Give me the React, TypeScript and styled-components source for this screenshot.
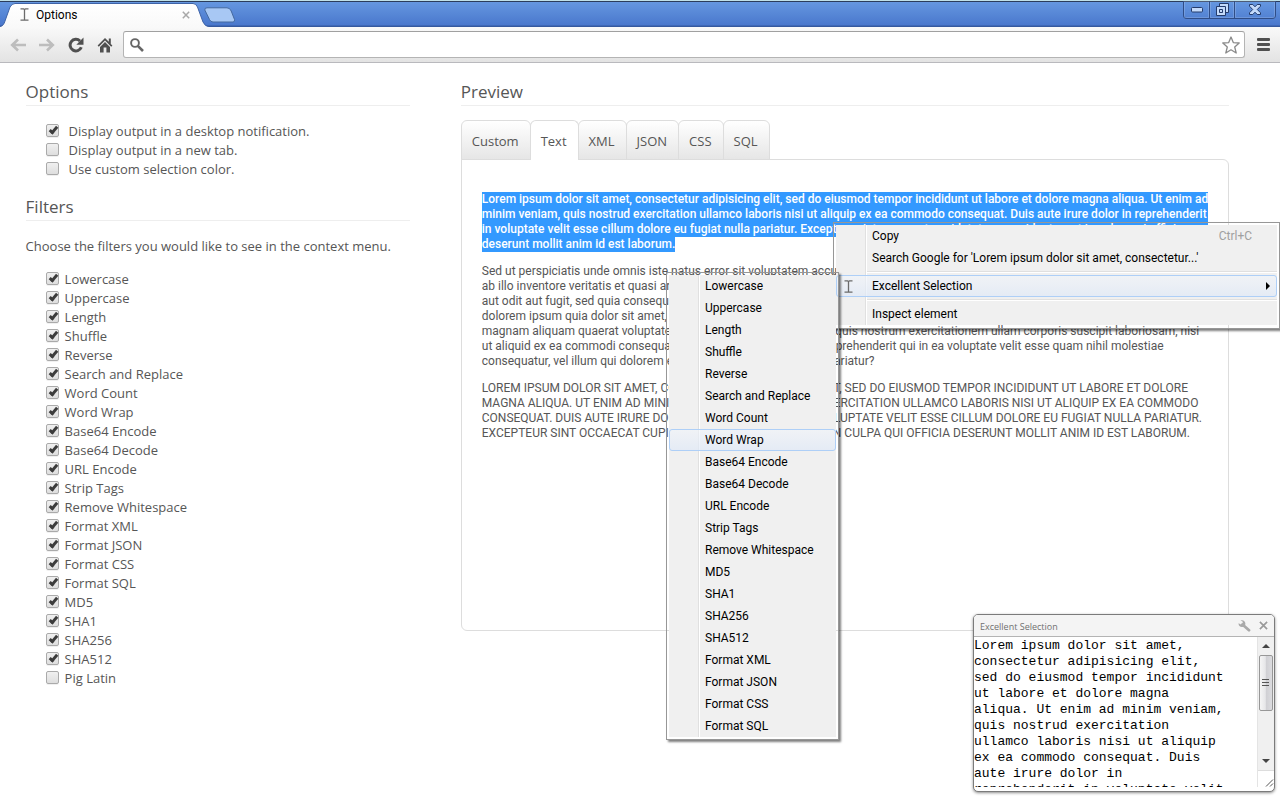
import React from 'react';
import styled, { createGlobalStyle, css } from 'styled-components';

const GlobalStyle = createGlobalStyle`
  * { box-sizing: border-box; }
  html, body { margin: 0; padding: 0; }
  body {
    background: #fff;
    color: #565656;
    font-family: "Open Sans", "Noto Sans", sans-serif;
    font-size: 13px;
    line-height: 19px;
    overflow: hidden;
  }
  button { font: inherit; color: inherit; border: 0; padding: 0; background: none; display: block; }
  svg { display: block; }
`;

const Window = styled.div`
  position: relative;
  display: flex;
  flex-direction: column;
  min-height: 100vh;
`;

/* ---------- browser frame ---------- */

const TitleBar = styled.header`
  display: flex;
  align-items: flex-end;
  height: 27px;
  border-top: 1px solid #bfe0e8;
  background: linear-gradient(#2b3d5c 0, #2b3d5c 1px, #6597e0 1px, #4a78cd 24px, #35599f 25px, #35599f 100%);
`;

const BrowserTab = styled.div`
  position: relative;
  display: flex;
  align-items: center;
  width: 204px;
  height: 25px;
  padding: 0 14px 0 20px;
  color: #000;
  font: 12px/16px Roboto, sans-serif;
`;

const TabShape = styled.svg`
  position: absolute;
  left: 0;
  bottom: 0;
`;

const TabTitle = styled.span`
  position: relative;
  flex: 1;
  margin-left: 7px;
`;

const TabIcon = styled.span`
  position: relative;
`;

const NewTab = styled.button`
  align-self: flex-start;
  margin-top: 6px;
`;

const WindowControls = styled.div`
  display: flex;
  align-self: flex-start;
  height: 18px;
  margin: 0 4px 0 auto;
  border: 1px solid #2f4d87;
  border-top: 0;
  border-radius: 0 0 4px 4px;
`;

const ControlButton = styled.button<{ $wide?: boolean }>`
  display: flex;
  align-items: center;
  justify-content: center;
  width: ${(p) => (p.$wide ? 41 : 25)}px;
  box-shadow: inset 0 0 0 1px rgba(255, 255, 255, 0.16);
  & + & { border-left: 1px solid #2f4d87; }
`;

const Toolbar = styled.nav`
  display: flex;
  align-items: center;
  height: 36px;
  padding: 0 10px 0 3px;
  border-bottom: 1px solid #b9b9bd;
  background: linear-gradient(#f9f9f9, #e3e3e3);
`;

const ToolButton = styled.button`
  display: flex;
  align-items: center;
  justify-content: center;
  width: 29px;
  height: 26px;
`;

const MenuButton = styled(ToolButton)`
  width: 14px;
  margin-left: 11px;
`;

const AddressBar = styled.form`
  display: flex;
  align-items: center;
  flex: 1;
  height: 27px;
  margin-left: 4px;
  padding: 0 4px 0 6px;
  border: 1px solid #b4b4b4;
  border-top-color: #a0a0a0;
  border-radius: 3px;
  background: #fff;
`;

const AddressInput = styled.input`
  flex: 1;
  min-width: 0;
  margin: 0 8px;
  border: 0;
  outline: 0;
  background: none;
  font: 13px/18px Roboto, sans-serif;
`;

/* ---------- options page ---------- */

const PageGrid = styled.main`
  display: flex;
  align-items: flex-start;
  padding-top: 16px;
`;

const SettingsColumn = styled.section`
  width: 30%;
  margin-left: 2%;
`;

const PreviewColumn = styled.section`
  width: 60%;
  margin-left: 4%;
`;

const Heading = styled.h2`
  margin: 0;
  padding-bottom: 1px;
  border-bottom: 1px solid #eee;
  font-size: 17px;
  line-height: 25px;
  font-weight: 400;
`;

const Intro = styled.p`
  margin: 16px 0 14px;
`;

const CheckList = styled.ul<{ $first?: boolean }>`
  list-style: none;
  margin: ${(p) => (p.$first ? '16px 0 15px' : '0')};
  padding: 0 0 0 20px;
`;

const CheckLabel = styled.label<{ $gap: number }>`
  display: flex;
  align-items: center;
  gap: ${(p) => p.$gap}px;
  height: 19px;
`;

const tick = css`
  &::after {
    content: "";
    position: absolute;
    left: 4px;
    top: 0;
    width: 2px;
    height: 6px;
    border: solid #3c3c3c;
    border-width: 0 3px 3px 0;
    transform: rotate(40deg);
  }
`;

const CheckBox = styled.input`
  appearance: none;
  position: relative;
  flex: none;
  width: 13px;
  height: 13px;
  margin: 0 0 2px;
  border: 1px solid #aaa;
  border-radius: 2px;
  background: linear-gradient(#f0f0f0, #dedede);
  box-shadow: 0 1px 0 rgba(0, 0, 0, 0.06);
  &:checked { ${tick} }
`;

const TabRow = styled.div`
  display: flex;
  margin-top: 14px;
`;

const PreviewTab = styled.button<{ $active?: boolean }>`
  position: relative;
  height: 40px;
  padding: 2px 11px 0 10px;
  margin-bottom: -1px;
  border: 1px solid #ddd;
  border-bottom: ${(p) => (p.$active ? '0' : '1px solid #ddd')};
  border-radius: 6px 6px 0 0;
  background: ${(p) => (p.$active ? '#fff' : 'linear-gradient(#fff, #e6e6e6)')};
  & + & { margin-left: -1px; }
`;

const PreviewPanel = styled.div`
  min-height: 472px;
  padding: 32px 20px;
  border: 1px solid #ddd;
  border-radius: 0 6px 6px 6px;
  font: 12px/15px Roboto, "Open Sans", sans-serif;
`;

const Paragraph = styled.p`
  margin: 0 0 12px;
`;

const Line = styled.span`
  display: block;
  white-space: nowrap;
`;

const SelectedLine = styled(Line)<{ $last?: boolean }>`
  width: ${(p) => (p.$last ? 'fit-content' : '100%')};
  background: #3399ff;
  color: #fff;
  font-weight: 500;
`;

/* ---------- context menu ---------- */

const menuBox = css`
  list-style: none;
  margin: 0;
  padding: 2px;
  border: 1px solid #979797;
  background: linear-gradient(90deg, #f0f0f0 29px, #e0e0e0 29px, #e0e0e0 30px, #fff 30px, #fff 31px, #f0f0f0 31px) content-box #f0f0f0;
  box-shadow: 2px 2px 2px rgba(0, 0, 0, 0.5);
  color: #000;
  font: 12px/20px Roboto, "Open Sans", sans-serif;
`;

const ContextMenu = styled.ul`
  ${menuBox}
  position: absolute;
  top: 222px;
  right: 0;
  width: 447px;
  padding-bottom: 3px;
`;

const SubMenu = styled.ul`
  ${menuBox}
  position: absolute;
  top: -3px;
  right: calc(100% - 3px);
  width: 173px;
`;

const MenuEntry = styled.li`
  position: relative;
`;

const MenuItem = styled.button<{ $hot?: boolean }>`
  display: flex;
  align-items: center;
  width: 100%;
  height: 22px;
  padding: 0 6px 0 0;
  border: 1px solid ${(p) => (p.$hot ? '#aecff7' : 'transparent')};
  border-radius: 3px;
  background: ${(p) => (p.$hot ? 'linear-gradient(rgba(240,244,250,.6), rgba(224,233,247,.7))' : 'none')};
  text-align: left;
`;

const IconSlot = styled.span`
  display: flex;
  justify-content: center;
  flex: none;
  width: 22px;
  margin-right: 13px;
`;

const ItemText = styled.span`
  flex: 1;
  white-space: nowrap;
`;

const Shortcut = styled.span`
  margin-right: 18px;
  color: #a0a0a0;
`;

const Separator = styled.li`
  height: 6px;
  margin-left: 31px;
  background: linear-gradient(#e0e0e0 1px, #fff 1px) 0 2px / 100% 2px no-repeat;
`;

/* ---------- notification ---------- */

const Notification = styled.aside`
  position: absolute;
  right: 5px;
  bottom: 8px;
  width: 302px;
  height: 178px;
  display: flex;
  flex-direction: column;
  border: 1px solid #7b7b7b;
  border-radius: 5px;
  background: #fff;
  box-shadow: 0 1px 3px rgba(0, 0, 0, 0.45);
  overflow: hidden;
`;

const NoticeHeader = styled.div`
  display: flex;
  align-items: center;
  gap: 8px;
  height: 22px;
  padding: 0 6px;
  border-bottom: 1px solid #b4b4b4;
  background: #f4f4f4;
  color: #707070;
  font-size: 9px;
  line-height: 14px;
`;

const NoticeTitle = styled.span`
  flex: 1;
  padding-top: 2px;
`;

const NoticeBody = styled.div`
  display: flex;
  align-items: flex-start;
  height: 154px;
`;

const Output = styled.textarea`
  flex: 1;
  min-width: 0;
  height: 150px;
  margin: 0;
  padding: 1px 0 0;
  border: 0;
  outline: 0;
  resize: none;
  overflow: hidden;
  white-space: pre;
  color: #000;
  background: #fff;
  font: 13px/16px "Liberation Mono", monospace;
`;

const ScrollBar = styled.div`
  display: flex;
  flex-direction: column;
  width: 17px;
  height: 150px;
  border-left: 1px solid #e4e4e4;
`;

const Track = styled.div`
  display: flex;
  flex-direction: column;
  align-items: center;
  height: 134px;
  padding: 7px 1px;
  border-bottom: 1px solid #ddd;
  background: #f0f0f0;
`;

const Thumb = styled.div`
  display: flex;
  align-items: center;
  justify-content: center;
  width: 14px;
  height: 56px;
  margin: 7px 0 auto;
  border: 1px solid #979797;
  border-radius: 2px;
  background: linear-gradient(90deg, #f5f5f5, #e6e6e8 45%, #cfcfd3 50%, #dcdcdf);
`;

const IBeam = () => (
  <svg width="9" height="13" viewBox="0 0 9 13" fill="none" stroke="#6b6b6b" strokeWidth="1.3" aria-hidden="true">
    <path d="M.5 .8h3l1 .8 1-.8h3M.5 12.2h3l1-.8 1 .8h3M4.5 1.5v10" />
  </svg>
);

const Arrow = ({ flip }: { flip?: boolean }) => (
  <svg width="16" height="14" viewBox="0 0 16 14" fill="none" stroke="#bdbdbd" strokeWidth="2.6" aria-hidden="true">
    {flip ? <path d="M0 7h13M8 1.5L13.8 7L8 12.5" /> : <path d="M16 7H3M8 1.5L2.2 7L8 12.5" />}
  </svg>
);

const CloseX = ({ color, size = 8 }: { color: string; size?: number }) => (
  <svg width={size} height={size} viewBox="0 0 8 8" stroke={color} strokeWidth="1.5" aria-hidden="true">
    <path d="M.8.8l6.4 6.4M7.2.8L.8 7.2" />
  </svg>
);

const TabClose = styled.button`
  position: relative;
`;

const options = [
  { label: 'Display output in a desktop notification.', on: true },
  { label: 'Display output in a new tab.', on: false },
  { label: 'Use custom selection color.', on: false },
];

const filters = [
  'Lowercase', 'Uppercase', 'Length', 'Shuffle', 'Reverse', 'Search and Replace', 'Word Count', 'Word Wrap',
  'Base64 Encode', 'Base64 Decode', 'URL Encode', 'Strip Tags', 'Remove Whitespace', 'Format XML', 'Format JSON',
  'Format CSS', 'Format SQL', 'MD5', 'SHA1', 'SHA256', 'SHA512', 'Pig Latin',
];

const menuFilters = [
  'Lowercase', 'Uppercase', 'Length', 'Shuffle', 'Reverse', 'Search and Replace', 'Word Count', 'Word Wrap',
  'Base64 Encode', 'Base64 Decode', 'URL Encode', 'Strip Tags', 'Remove Whitespace', 'MD5', 'SHA1', 'SHA256',
  'SHA512', 'Format XML', 'Format JSON', 'Format CSS', 'Format SQL',
];

const previewTabs = ['Custom', 'Text', 'XML', 'JSON', 'CSS', 'SQL'];

const selected = [
  'Lorem ipsum dolor sit amet, consectetur adipisicing elit, sed do eiusmod tempor incididunt ut labore et dolore magna aliqua. Ut enim ad',
  'minim veniam, quis nostrud exercitation ullamco laboris nisi ut aliquip ex ea commodo consequat. Duis aute irure dolor in reprehenderit',
  'in voluptate velit esse cillum dolore eu fugiat nulla pariatur. Excepteur sint occaecat cupidatat non proident, sunt in culpa qui officia',
  'deserunt mollit anim id est laborum.',
];

const plain = [
  'Sed ut perspiciatis unde omnis iste natus error sit voluptatem accusantium doloremque laudantium, totam rem aperiam, eaque ipsa quae',
  'ab illo inventore veritatis et quasi architecto beatae vitae dicta sunt explicabo. Nemo enim ipsam voluptatem quia voluptas sit aspernatur',
  'aut odit aut fugit, sed quia consequuntur magni dolores eos qui ratione voluptatem sequi nesciunt. Neque porro quisquam est, qui',
  'dolorem ipsum quia dolor sit amet, consectetur, adipisci velit, sed quia non numquam eius modi tempora incidunt ut labore et dolore',
  'magnam aliquam quaerat voluptatem. Ut enim ad minima veniam, quis nostrum exercitationem ullam corporis suscipit laboriosam, nisi',
  'ut aliquid ex ea commodi consequatur? Quis autem vel eum iure reprehenderit qui in ea voluptate velit esse quam nihil molestiae',
  'consequatur, vel illum qui dolorem eum fugiat quo voluptas nulla pariatur?',
];

const upper = [
  'LOREM IPSUM DOLOR SIT AMET, CONSECTETUR ADIPISICING ELIT, SED DO EIUSMOD TEMPOR INCIDIDUNT UT LABORE ET DOLORE',
  'MAGNA ALIQUA. UT ENIM AD MINIM VENIAM, QUIS NOSTRUD EXERCITATION ULLAMCO LABORIS NISI UT ALIQUIP EX EA COMMODO',
  'CONSEQUAT. DUIS AUTE IRURE DOLOR IN REPREHENDERIT IN VOLUPTATE VELIT ESSE CILLUM DOLORE EU FUGIAT NULLA PARIATUR.',
  'EXCEPTEUR SINT OCCAECAT CUPIDATAT NON PROIDENT, SUNT IN CULPA QUI OFFICIA DESERUNT MOLLIT ANIM ID EST LABORUM.',
];

const output = [
  'Lorem ipsum dolor sit amet,',
  'consectetur adipisicing elit,',
  'sed do eiusmod tempor incididunt',
  'ut labore et dolore magna',
  'aliqua. Ut enim ad minim veniam,',
  'quis nostrud exercitation',
  'ullamco laboris nisi ut aliquip',
  'ex ea commodo consequat. Duis',
  'aute irure dolor in',
  'reprehenderit in voluptate velit',
].join('\n');

export default function App() {
  return (
    <Window>
      <GlobalStyle />
      <TitleBar>
        <BrowserTab>
          <TabShape width="209" height="25" viewBox="0 0 209 25" aria-hidden="true">
            <defs>
              <linearGradient id="tabFill" x1="0" y1="0" x2="0" y2="1">
                <stop offset="0" stopColor="#ffffff" />
                <stop offset="1" stopColor="#f9f9f9" />
              </linearGradient>
            </defs>
            <path
              d="M0 25C3 24 4 22 5 19L10 5Q12 1.5 15 1.5H193Q196 1.5 197.500 5L203 20Q205 24.500 209 25Z"
              fill="url(#tabFill)"
            />
            <path
              d="M0 24.500C3 24 4 22 5 19L10 5Q12 1.500 15 1.500H193Q196 1.500 197.500 5L203 20Q205 24.500 209 24.500"
              fill="none"
              stroke="#3f64a8"
            />
          </TabShape>
          <TabIcon><IBeam /></TabIcon>
          <TabTitle>Options</TabTitle>
          <TabClose aria-label="Close tab"><CloseX color="#a8a8a8" /></TabClose>
        </BrowserTab>
        <NewTab aria-label="New tab">
          <svg width="32" height="16" viewBox="0 0 32 16" aria-hidden="true">
            <path d="M3 .8H23Q26 .8 27.200 4L30.500 12.500Q31 15 29 15H9Q6.500 15 5.500 12.500L.8 3Q.5 .8 3 .8Z" fill="#a8c8f4" stroke="#44699f" />
          </svg>
        </NewTab>
        <WindowControls>
          <ControlButton aria-label="Minimize">
            <svg width="12" height="6" viewBox="0 0 12 6"><rect x=".5" y=".5" width="11" height="4.500" rx="1" fill="#c4dafa" stroke="#243c6c" /></svg>
          </ControlButton>
          <ControlButton aria-label="Restore">
            <svg width="13" height="13" viewBox="0 0 13 13" fill="#c4dafa" stroke="#243c6c">
              <path d="M3.500.5h9v9h-9z" />
              <path d="M.5 3.500h9v9h-9zM3.500 6.500h3v3h-3z" fillRule="evenodd" />
            </svg>
          </ControlButton>
          <ControlButton $wide aria-label="Close">
            <svg width="12" height="11" viewBox="0 0 12 11" fill="#c4dafa" stroke="#243c6c">
              <path d="M.5.5h3.300L6 2.800 8.200.5h3.300v1.700L8.300 5.500l3.200 3.300v1.700H8.200L6 8.200 3.800 10.500H.5V8.800l3.200-3.300L.5 2.200z" />
            </svg>
          </ControlButton>
        </WindowControls>
      </TitleBar>

      <Toolbar aria-label="Browser">
        <ToolButton aria-label="Back"><Arrow /></ToolButton>
        <ToolButton aria-label="Forward"><Arrow flip /></ToolButton>
        <ToolButton aria-label="Reload">
          <svg width="16" height="16" viewBox="0 0 16 16" aria-hidden="true">
            <path d="M13.300 10.300A5.800 5.800 0 1 1 12 4" fill="none" stroke="#505050" strokeWidth="3" />
            <path d="M15.500.5v7.200H8.300z" fill="#505050" />
          </svg>
        </ToolButton>
        <ToolButton aria-label="Home">
          <svg width="16" height="16" viewBox="0 0 16 16" fill="#505050" aria-hidden="true">
            <path d="M8 1L.6 8.500l1.200 1.200L8 3.600l6.200 6.100 1.200-1.200L13.800 6.900V1.500h-2v3.300z" />
            <path d="M8 5L3 9.900V15.500h3.600V10.500h2.800v5H13V9.900z" />
          </svg>
        </ToolButton>
        <AddressBar role="search">
          <svg width="14" height="14" viewBox="0 0 14 14" fill="none" stroke="#666" aria-hidden="true">
            <circle cx="5" cy="5" r="3.900" strokeWidth="1.900" />
            <path d="M7.800 7.800L13 13" strokeWidth="2.600" />
          </svg>
          <AddressInput aria-label="Address" type="text" />
          <svg width="18" height="18" viewBox="0 0 18 18" fill="#fff" stroke="#8a8a8a" strokeWidth="1.300" strokeLinejoin="round" aria-hidden="true">
            <path d="M9 1L11.300 6.600 17.200 7 12.700 11 14.200 17 9 13.800 3.800 17 5.300 11 .8 7 6.700 6.600z" />
          </svg>
        </AddressBar>
        <MenuButton aria-label="Menu">
          <svg width="13" height="13" viewBox="0 0 13 13" fill="#505050" aria-hidden="true">
            <rect width="13" height="3" rx="1" /><rect y="5" width="13" height="3" rx="1" /><rect y="10" width="13" height="3" rx="1" />
          </svg>
        </MenuButton>
      </Toolbar>

      <PageGrid>
        <SettingsColumn>
          <Heading>Options</Heading>
          <CheckList $first>
            {options.map((o) => (
              <li key={o.label}>
                <CheckLabel $gap={10}>
                  <CheckBox type="checkbox" defaultChecked={o.on} />
                  {o.label}
                </CheckLabel>
              </li>
            ))}
          </CheckList>
          <Heading>Filters</Heading>
          <Intro>Choose the filters you would like to see in the context menu.</Intro>
          <CheckList>
            {filters.map((f) => (
              <li key={f}>
                <CheckLabel $gap={6}>
                  <CheckBox type="checkbox" defaultChecked={f !== 'Pig Latin'} />
                  {f}
                </CheckLabel>
              </li>
            ))}
          </CheckList>
        </SettingsColumn>

        <PreviewColumn>
          <Heading>Preview</Heading>
          <TabRow role="tablist">
            {previewTabs.map((t) => (
              <PreviewTab key={t} role="tab" aria-selected={t === 'Text'} $active={t === 'Text'}>{t}</PreviewTab>
            ))}
          </TabRow>
          <PreviewPanel role="tabpanel">
            <Paragraph>
              {selected.map((l, i) => <SelectedLine key={l} $last={i === selected.length - 1}>{l}</SelectedLine>)}
            </Paragraph>
            <Paragraph>{plain.map((l) => <Line key={l}>{l}</Line>)}</Paragraph>
            <Paragraph>{upper.map((l) => <Line key={l}>{l}</Line>)}</Paragraph>
          </PreviewPanel>
        </PreviewColumn>
      </PageGrid>

      <Notification>
        <NoticeHeader>
          <NoticeTitle>Excellent Selection</NoticeTitle>
          <button aria-label="Settings">
            <svg width="13" height="12" viewBox="0 0 13 12" aria-hidden="true">
              <path d="M4.500 4.500L11 10.200" stroke="#a9a9a9" strokeWidth="2.800" strokeLinecap="round" />
              <path d="M2.500.6A3.400 3.400 0 1 1 .6 3.200L3 4.600 4.800 3.600 4.600 1.600z" fill="#a9a9a9" />
            </svg>
          </button>
          <button aria-label="Dismiss"><CloseX color="#9a9a9a" size={9} /></button>
        </NoticeHeader>
        <NoticeBody>
          <Output readOnly aria-label="Output" value={output} />
          <ScrollBar aria-hidden="true">
            <Track>
              <svg width="8" height="4" viewBox="0 0 8 4"><path d="M0 4L4 0l4 4z" fill="#444" /></svg>
              <Thumb>
                <svg width="8" height="8" viewBox="0 0 8 8" stroke="#555"><path d="M0 .5h7M0 3.500h7M0 6.500h7" /></svg>
              </Thumb>
              <svg width="8" height="4" viewBox="0 0 8 4"><path d="M0 0h8L4 4z" fill="#444" /></svg>
            </Track>
            <svg width="16" height="16" viewBox="0 0 16 16" stroke="#555"><path d="M8 15.500l7-7M12 15.500l3-3" /></svg>
          </ScrollBar>
        </NoticeBody>
      </Notification>

      <ContextMenu>
        <MenuEntry>
          <MenuItem><IconSlot /><ItemText>Copy</ItemText><Shortcut>Ctrl+C</Shortcut></MenuItem>
        </MenuEntry>
        <MenuEntry>
          <MenuItem><IconSlot /><ItemText>Search Google for 'Lorem ipsum dolor sit amet, consectetur...'</ItemText></MenuItem>
        </MenuEntry>
        <Separator role="separator" />
        <MenuEntry>
          <MenuItem $hot>
            <IconSlot><IBeam /></IconSlot>
            <ItemText>Excellent Selection</ItemText>
            <svg width="4" height="8" viewBox="0 0 4 8" aria-hidden="true"><path d="M0 0l4 4-4 4z" fill="#000" /></svg>
          </MenuItem>
          <SubMenu>
            {menuFilters.map((f) => (
              <MenuEntry key={f}>
                <MenuItem $hot={f === 'Word Wrap'}><IconSlot /><ItemText>{f}</ItemText></MenuItem>
              </MenuEntry>
            ))}
          </SubMenu>
        </MenuEntry>
        <Separator role="separator" />
        <MenuEntry>
          <MenuItem><IconSlot /><ItemText>Inspect element</ItemText></MenuItem>
        </MenuEntry>
      </ContextMenu>
    </Window>
  );
}
